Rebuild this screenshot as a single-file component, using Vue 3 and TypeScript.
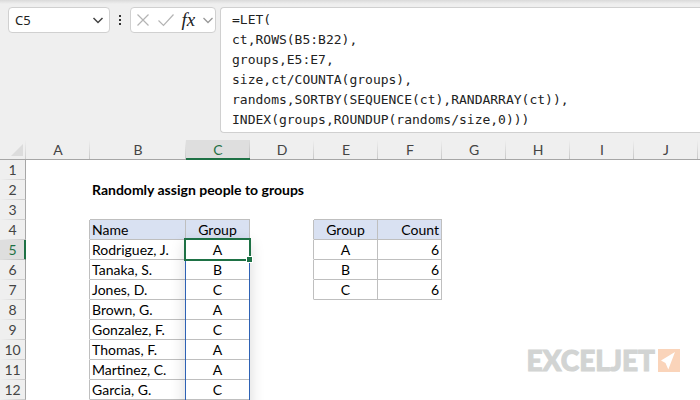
<script setup lang="ts">
import { ref } from 'vue'

interface Cell {
  text: string
  kind: string
}

const cellName = ref('C5')
const formula = ref(
  [
    '=LET(',
    'ct,ROWS(B5:B22),',
    'groups,E5:E7,',
    'size,ct/COUNTA(groups),',
    'randoms,SORTBY(SEQUENCE(ct),RANDARRAY(ct)),',
    'INDEX(groups,ROUNDUP(randoms/size,0)))',
  ].join('\n'),
)

const columns = ['A', 'B', 'C', 'D', 'E', 'F', 'G', 'H', 'I', 'J']
const rowCount = 12

const people: [string, string][] = [
  ['Rodriguez, J.', 'A'],
  ['Tanaka, S.', 'B'],
  ['Jones, D.', 'C'],
  ['Brown, G.', 'A'],
  ['Gonzalez, F.', 'C'],
  ['Thomas, F.', 'A'],
  ['Martinez, C.', 'A'],
  ['Garcia, G.', 'C'],
]
const counts: [string, string][] = [
  ['A', '6'],
  ['B', '6'],
  ['C', '6'],
]

const cells: Record<string, Cell> = {
  B2: { text: 'Randomly assign people to groups', kind: 'title' },
  A4: { text: '', kind: 'edge' },
  B3: { text: '', kind: 'under' },
  C3: { text: '', kind: 'under' },
  E3: { text: '', kind: 'under' },
  F3: { text: '', kind: 'under' },
  D4: { text: '', kind: 'edge' },
  B4: { text: 'Name', kind: 'boxed head' },
  C4: { text: 'Group', kind: 'boxed head center' },
  E4: { text: 'Group', kind: 'boxed head center' },
  F4: { text: 'Count', kind: 'boxed head right' },
}
people.forEach(([name, group], i) => {
  const row = i + 5
  cells[`A${row}`] = { text: '', kind: 'edge' }
  cells[`B${row}`] = { text: name, kind: 'boxed' }
  cells[`C${row}`] = { text: group, kind: 'boxed center' }
})
counts.forEach(([group, count], i) => {
  const row = i + 5
  cells[`D${row}`] = { text: '', kind: 'edge' }
  cells[`E${row}`] = { text: group, kind: 'boxed center' }
  cells[`F${row}`] = { text: count, kind: 'boxed right' }
})
</script>

<template>
  <main class="app">
    <header class="bar">
      <div class="box name-box">
        <input v-model="cellName" class="name-input" aria-label="Name box" spellcheck="false" />
        <button class="tool" type="button" aria-label="Show names">
          <svg width="12" height="8" viewBox="0 0 12 8"><path d="M1.500 2 6 6.500l4.500-4.500" fill="none" stroke="#444" stroke-width="1.500" /></svg>
        </button>
      </div>
      <svg class="dots" width="4" height="14" viewBox="0 0 4 14">
        <path d="M1 2h2v2H1zM1 6h2v2H1zM1 10h2v2H1z" fill="#333" />
      </svg>
      <div class="box tools">
        <button class="tool" type="button" aria-label="Cancel">
          <svg width="14" height="14" viewBox="0 0 14 14"><path d="M1.500 1.500l11 11M12.500 1.500l-11 11" fill="none" stroke="#b4b4b4" stroke-width="1.200" /></svg>
        </button>
        <button class="tool" type="button" aria-label="Enter">
          <svg width="18" height="14" viewBox="0 0 18 14"><path d="M1.500 7.500 6.500 12.500 16.500 1.500" fill="none" stroke="#b4b4b4" stroke-width="1.200" /></svg>
        </button>
        <button class="tool fx" type="button" aria-label="Insert function">fx</button>
        <button class="tool" type="button" aria-label="More functions">
          <svg width="12" height="8" viewBox="0 0 12 8"><path d="M1.500 2 6 6.500l4.500-4.500" fill="none" stroke="#999" stroke-width="1.300" /></svg>
        </button>
      </div>
      <textarea v-model="formula" class="formula" rows="6" aria-label="Formula bar" spellcheck="false"></textarea>
    </header>

    <section class="sheet">
      <table class="grid">
        <colgroup>
          <col class="col-rows" />
          <col v-for="c in columns" :key="c" :class="c === 'B' ? 'col-wide' : 'col'" />
          <col />
        </colgroup>
        <thead>
          <tr>
            <th class="corner">
              <svg width="12" height="12" viewBox="0 0 12 12"><path d="M12 0v12H0z" fill="#dcdcdc" /></svg>
            </th>
            <th v-for="c in columns" :key="c" scope="col" :class="['col-head', { active: c === 'C' }]">{{ c }}</th>
            <td class="col-head rest"></td>
          </tr>
        </thead>
        <tbody>
          <tr v-for="r in rowCount" :key="r">
            <th scope="row" :class="['row-head', { active: r === 5 }]">{{ r }}</th>
            <td v-for="c in columns" :key="c" :class="cells[c + r]?.kind">
              <div v-if="c + r === 'C5'" class="anchor">
                A
                <span class="spill"></span>
                <span class="selection"></span>
                <span class="handle"></span>
              </div>
              <template v-else>{{ cells[c + r]?.text }}</template>
            </td>
            <td class="rest"></td>
          </tr>
        </tbody>
      </table>
      <div class="brand">
        <span class="brand-name">EXCELJET</span>
        <svg width="22" height="23" viewBox="0 0 22 23">
          <path d="M0 0h22v23H0z" fill="#fad4ba" />
          <path d="M17 3 3 11.500l4.500 2.500 2.800 6.500z" fill="#fff" />
        </svg>
      </div>
    </section>
  </main>
</template>

<style>
body {
  margin: 0;
  background: #fff;
}
</style>

<style scoped>
.app {
  height: 100vh;
  overflow: hidden;
  display: flex;
  flex-direction: column;
  background: #efefef;
  font-family: Lato, "Liberation Sans", sans-serif;
}
.bar {
  display: flex;
  align-items: flex-start;
  padding: 7px 0 7px 8px;
  background: linear-gradient(#dadada, #efefef 4px);
}
.box {
  box-sizing: border-box;
  height: 26px;
  display: flex;
  align-items: center;
  background: #fff;
  border: 1px solid #d0d0d0;
  border-radius: 4px;
}
.name-box {
  width: 102px;
  padding: 0 4px 0 6px;
}
.name-input {
  flex: 1;
  min-width: 0;
  padding: 0;
  border: 0;
  outline: 0;
  background: transparent;
  color: #222;
  font: 13px/20px "Noto Sans", sans-serif;
}
.tool {
  display: flex;
  padding: 0;
  border: 0;
  background: transparent;
}
.dots {
  margin: 6px 8px;
}
.tools {
  width: 86px;
  justify-content: space-between;
  padding: 0 1px 0 5px;
}
.fx {
  color: #222;
  font: italic 19px/20px "Liberation Serif", serif;
}
.name-box .tool {
  padding: 0 1px;
}
.formula {
  flex: 1;
  min-width: 0;
  box-sizing: border-box;
  height: 126px;
  margin: 0 0 0 4px;
  padding: 2px 0 0 11px;
  border: 1px solid #d0d0d0;
  border-right: 0;
  border-radius: 4px 0 0 4px;
  outline: 0;
  resize: none;
  overflow: hidden;
  background: #fff;
  color: #222;
  font: 13px/20px "DejaVu Sans Mono", monospace;
}
.sheet {
  position: relative;
  flex: 1;
  min-height: 0;
  overflow: hidden;
  background: #fff;
}
.grid {
  width: 100%;
  min-width: 700px;
  table-layout: fixed;
  border-collapse: separate;
  border-spacing: 0;
  color: #000;
  font-size: 14px;
  line-height: 19px;
}
.col-rows {
  width: 26px;
}
.col {
  width: 64px;
}
.col-wide {
  width: 96px;
}
.grid th,
.grid td {
  box-sizing: border-box;
  height: 20px;
  padding: 0 2px;
  border: 0 solid #bfbfbf;
  border-bottom: 1px solid transparent;
  white-space: nowrap;
}
.grid th {
  background-color: #efefef;
  color: #444;
  font-weight: 400;
  text-align: center;
}
.grid .rest {
  padding: 0;
}
.grid .corner {
  padding: 0 3px 3px 0;
  border-bottom-color: #a6a6a6;
  background: linear-gradient(#efefef, #cfcfcf) right / 1px 100% no-repeat #efefef;
  line-height: 0;
  text-align: right;
  vertical-align: bottom;
}
.grid .col-head {
  border-bottom-color: #a6a6a6;
  background: linear-gradient(#efefef, #c8c8c8) right / 1px 100% no-repeat #efefef;
}
.grid .col-head.rest {
  background: #efefef;
}
.grid .col-head.active {
  border-bottom-color: #1e7145;
  box-shadow: inset 0 -1px #1e7145;
  background: linear-gradient(#dedede, #b8b8b8) right / 1px 100% no-repeat #dedede;
  color: #1e7145;
}
.grid .row-head {
  padding: 0;
  border-right: 1px solid #a6a6a6;
  background: linear-gradient(90deg, #efefef, #c8c8c8) bottom / 100% 1px no-repeat border-box #efefef;
}
.grid .row-head.active {
  border-right-color: #1e7145;
  box-shadow: inset -1px 0 #1e7145;
  background: linear-gradient(90deg, #dedede, #b8b8b8) bottom / 100% 1px no-repeat border-box #dedede;
  color: #1e7145;
}
.grid .title {
  font-weight: 700;
}
.grid .edge {
  border-right: 1px solid #bfbfbf;
}
.grid .under {
  border-bottom-color: #bfbfbf;
}
.grid .boxed {
  border-right: 1px solid #bfbfbf;
  border-bottom-color: #bfbfbf;
}
.grid .head {
  background: #d9e1f2;
}
.grid .center {
  text-align: center;
}
.grid .right {
  text-align: right;
}
.anchor {
  position: relative;
}
.spill,
.selection,
.handle {
  position: absolute;
  box-sizing: border-box;
  pointer-events: none;
}
.spill {
  top: -1px;
  left: -3px;
  width: 65px;
  height: 361px;
  border: 1px solid #2e62b5;
  box-shadow: 0 4px 14px rgba(0, 0, 0, 0.16);
}
.selection {
  top: -2px;
  left: -4px;
  width: 67px;
  height: 23px;
  border: 2px solid #1e7145;
}
.handle {
  top: 16px;
  left: 58px;
  width: 7px;
  height: 7px;
  border: 1px solid #fff;
  background: #1e7145;
}
.brand {
  position: absolute;
  right: 20px;
  bottom: 28px;
  display: flex;
  align-items: center;
  gap: 3px;
  color: #d2d4d3;
}
.brand-name {
  font: 900 28px/23px Lato, sans-serif;
  -webkit-text-stroke: 1px #d2d4d3;
}
</style>
